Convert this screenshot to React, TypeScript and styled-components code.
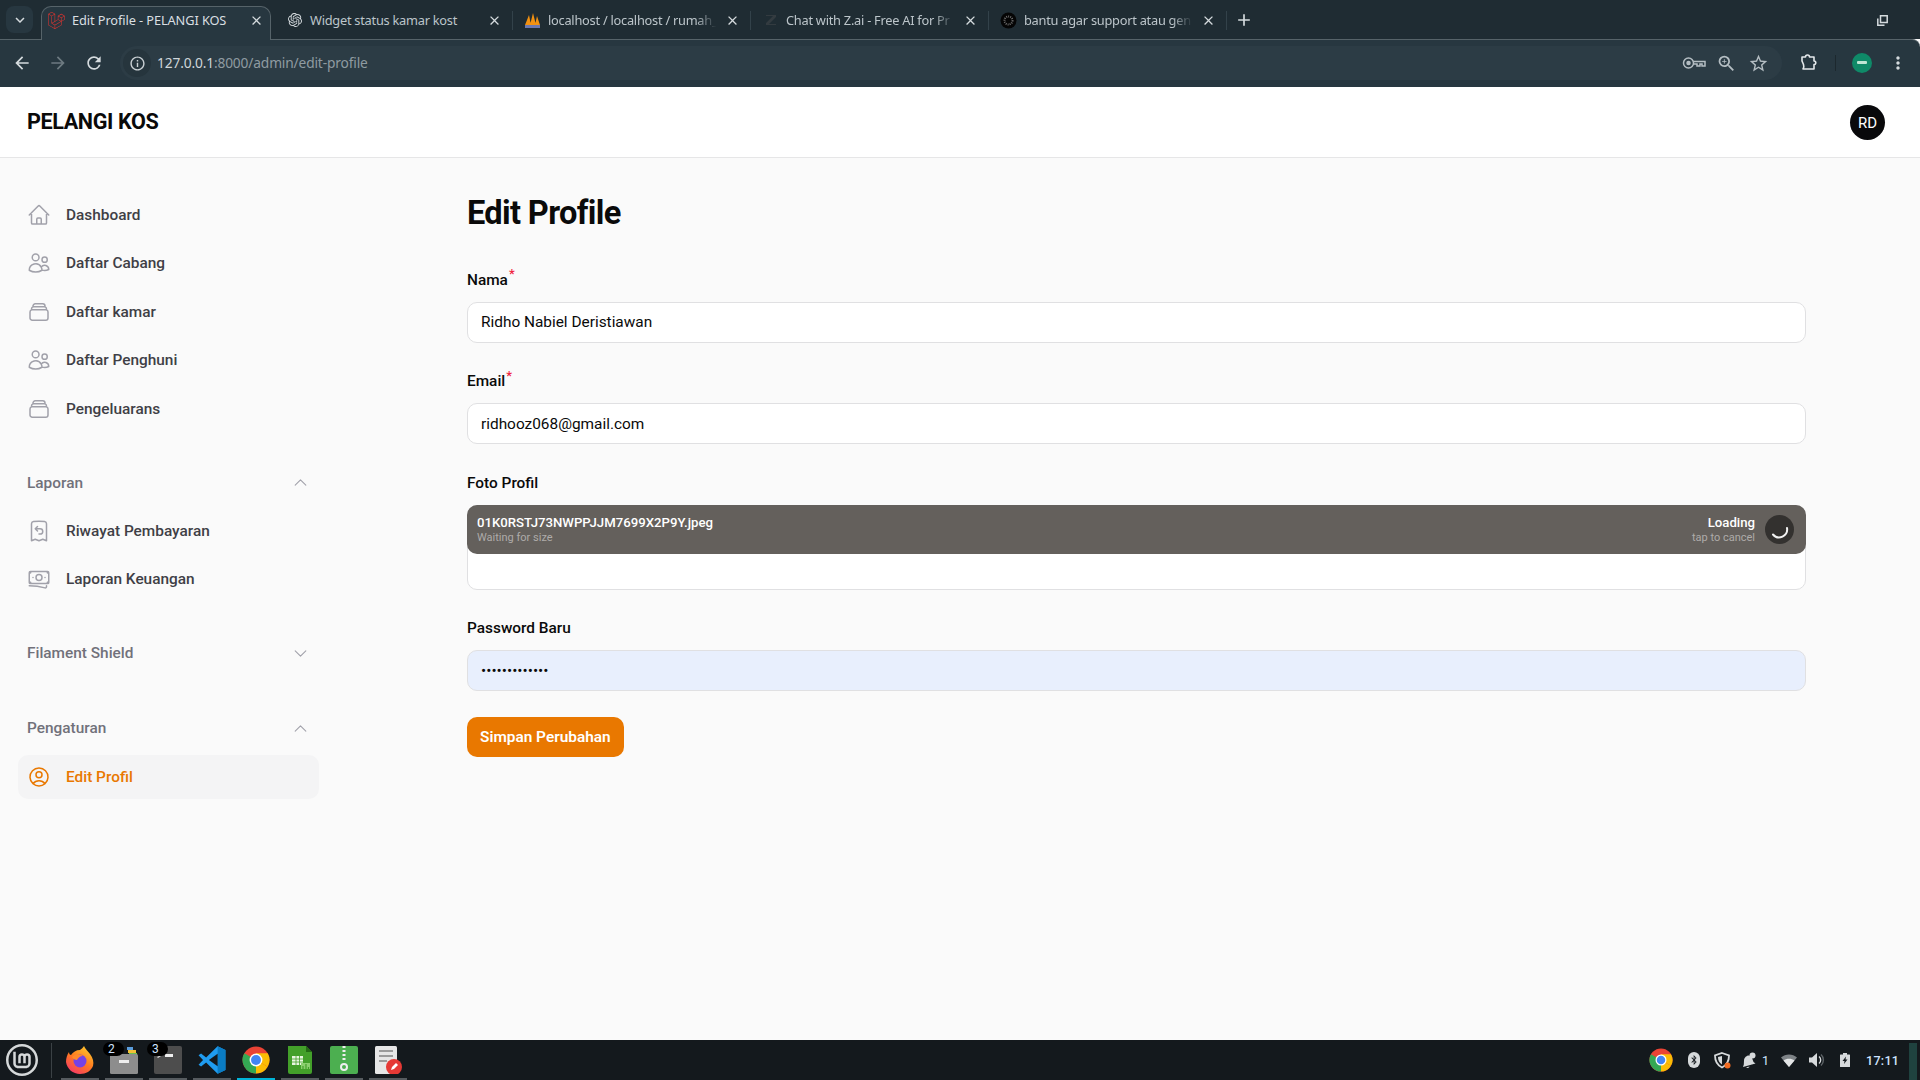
import styled, { createGlobalStyle } from "styled-components";
import type { ReactNode } from "react";
import {
  HiOutlineBanknotes,
  HiOutlineChevronDown,
  HiOutlineChevronUp,
  HiOutlineHome,
  HiOutlineReceiptRefund,
  HiOutlineRectangleStack,
  HiOutlineUserCircle,
  HiOutlineUsers,
} from "react-icons/hi2";
import {
  MdAdd,
  MdArrowBack,
  MdArrowForward,
  MdClose,
  MdInfoOutline,
  MdKeyboardArrowDown,
  MdMoreVert,
  MdRefresh,
  MdStarBorder,
  MdZoomIn,
} from "react-icons/md";
import { SiLaravel, SiLinuxmint, SiOpenai } from "react-icons/si";
import { FaBluetoothB } from "react-icons/fa";

const GlobalStyle = createGlobalStyle`
  html, body {
    margin: 0;
    padding: 0;
    background: #fafafa;
  }
  * {
    box-sizing: border-box;
  }
`;

const Screen = styled.div`
  display: flex;
  flex-direction: column;
  width: 1920px;
  height: 1080px;
  overflow: hidden;
  font-family: Roboto, "Liberation Sans", sans-serif;
`;

/* browser chrome */
const TabStrip = styled.div`
  display: flex;
  align-items: flex-end;
  height: 39px;
  flex-shrink: 0;
  padding-left: 6px;
  background: #1f2c33;
  font-family: "Noto Sans", sans-serif;
`;

const TabSearch = styled.div`
  display: flex;
  align-items: center;
  justify-content: center;
  align-self: flex-start;
  width: 27px;
  height: 27px;
  margin: 6px 4px 0 0;
  border-radius: 8px;
  background: #273740;
  color: #d5dbde;
  font-size: 18px;
`;

const Tab = styled.div<{ $active?: boolean; $sep?: boolean }>`
  position: relative;
  display: flex;
  align-items: center;
  flex-shrink: 0;
  width: 238px;
  height: 33px;
  padding: 0 0 5px 11px;
  color: ${(p) => (p.$active ? "#d9dfe2" : "#bcc5ca")};
  letter-spacing: ${(p) => (p.$active ? "-0.1px" : "-0.25px")};
  &::before {
    content: "";
    position: absolute;
    display: ${(p) => (p.$active ? "block" : "none")};
    top: 0;
    bottom: -1px;
    left: 4px;
    right: 4px;
    border: 1px solid #566369;
    border-bottom: none;
    border-radius: 10px 10px 0 0;
    background: #273740;
  }
  &::after {
    content: "";
    position: absolute;
    display: ${(p) => (p.$sep ? "block" : "none")};
    top: 5px;
    right: 0;
    width: 1px;
    height: 19px;
    background: #33424a;
  }
`;

const TabIcon = styled.span`
  position: relative;
  display: flex;
  align-items: center;
  justify-content: center;
  width: 17px;
  height: 17px;
  margin-right: 7px;
  flex-shrink: 0;
`;

const TabTitle = styled.span<{ $fade?: boolean }>`
  position: relative;
  width: 172px;
  white-space: nowrap;
  font-size: 12.8px;
  -webkit-mask-image: ${(p) =>
    p.$fade ? "linear-gradient(90deg, #000 86%, transparent 98%)" : "none"};
  mask-image: ${(p) =>
    p.$fade ? "linear-gradient(90deg, #000 86%, transparent 98%)" : "none"};
`;

const TabClose = styled.span`
  position: relative;
  display: flex;
  margin-left: 5px;
  color: #d5dbde;
  font-size: 15px;
`;

const NewTab = styled.span`
  display: flex;
  align-self: center;
  margin: 0 0 0 7px;
  color: #d5dbde;
  font-size: 20px;
`;

const WindowButton = styled.svg`
  margin: 0 32px 13px auto;
  align-self: flex-end;
`;

const Toolbar = styled.div`
  display: flex;
  align-items: center;
  height: 48px;
  flex-shrink: 0;
  padding: 0 4px 1px;
  border-top: 1px solid #566369;
  border-top-right-radius: 8px;
  background: #273740;
  color: #d5dbde;
  font-family: "Noto Sans", sans-serif;
`;

const NavButton = styled.span<{ $dim?: boolean }>`
  display: flex;
  align-items: center;
  justify-content: center;
  width: 36px;
  height: 34px;
  font-size: 20px;
  color: ${(p) => (p.$dim ? "#6d7a81" : "#d5dbde")};
`;

const Omnibox = styled.div`
  display: flex;
  align-items: center;
  flex: 1;
  height: 34px;
  margin: 0 9px 0 8px;
  padding: 0 8px 0 3px;
  border-radius: 17px;
  background: #2c3c45;
`;

const InfoChip = styled.span`
  display: flex;
  align-items: center;
  justify-content: center;
  width: 28px;
  height: 28px;
  margin-right: 6px;
  border-radius: 50%;
  background: #26353d;
  color: #c9d0d4;
  font-size: 17px;
`;

const Url = styled.span`
  flex: 1;
  padding-bottom: 2px;
  color: #8f9ba1;
  font-size: 13.75px;
  letter-spacing: -0.15px;
  b {
    font-weight: 400;
    color: #cfd6da;
  }
`;

const OmniAction = styled.span`
  display: flex;
  align-items: center;
  justify-content: center;
  width: 32px;
  color: #b5bec3;
  font-size: 21px;
`;

const ToolbarSep = styled.span`
  width: 1px;
  height: 16px;
  margin: 0 8px;
  background: #1c282e;
`;

const AccountDot = styled.span`
  position: relative;
  display: block;
  width: 20px;
  height: 20px;
  border-radius: 50%;
  background: #0f8a68;
  &::after {
    content: "";
    position: absolute;
    top: 8px;
    left: 5px;
    width: 10px;
    height: 3px;
    border-radius: 1px;
    background: #bfe6d4;
  }
`;

/* app */
const Header = styled.header`
  display: flex;
  align-items: center;
  justify-content: space-between;
  height: 71px;
  flex-shrink: 0;
  padding: 0 35px 0 27px;
  border-bottom: 1px solid #e6e6e7;
  background: #fff;
`;

const Brand = styled.div`
  margin-top: -1px;
  color: #0a0a0a;
  font-size: 21.6px;
  font-weight: 700;
  letter-spacing: -0.4px;
`;

const Avatar = styled.div`
  display: flex;
  align-items: center;
  justify-content: center;
  width: 35px;
  height: 35px;
  margin-top: 1px;
  border-radius: 50%;
  background: #09090b;
  color: #fff;
  font-size: 15px;
`;

const Body = styled.div`
  display: flex;
  flex: 1;
  min-height: 0;
  background: #fafafa;
`;

const Sidebar = styled.nav`
  display: flex;
  flex-direction: column;
  gap: 40px;
  width: 337px;
  flex-shrink: 0;
  padding: 35px 18px 0;
`;

const NavGroup = styled.div<{ $collapsed?: boolean }>`
  display: flex;
  flex-direction: column;
  gap: 4.4px;
  padding-bottom: ${(p) => (p.$collapsed ? "11px" : "0")};
`;

const GroupHead = styled.div`
  display: flex;
  align-items: center;
  justify-content: space-between;
  height: 24px;
  margin-bottom: 10px;
  padding: 0 10px 0 9px;
  color: #71717a;
  font-size: 15.4px;
  font-weight: 500;
  svg {
    color: #a1a1aa;
    font-size: 17px;
  }
`;

const CollapsedHead = styled(GroupHead)`
  margin-bottom: 0;
`;

const NavItem = styled.a<{ $active?: boolean }>`
  display: flex;
  align-items: center;
  gap: 15px;
  height: 44px;
  padding: 0 9px;
  border-radius: 10px;
  background: ${(p) => (p.$active ? "#f4f4f5" : "transparent")};
  color: ${(p) => (p.$active ? "#e97800" : "#3f3f46")};
  font-size: 15.4px;
  font-weight: 500;
  svg {
    flex-shrink: 0;
    color: ${(p) => (p.$active ? "#e97800" : "#a1a1aa")};
    font-size: 24px;
  }
`;

const Main = styled.main`
  flex: 1;
  padding: 33.5px 114px 0 130px;
`;

const Title = styled.h1`
  margin: 0 0 36px;
  color: #0a0a0a;
  font-size: 32.6px;
  line-height: 42px;
  font-weight: 700;
  letter-spacing: -0.65px;
`;

const Form = styled.form`
  display: flex;
  flex-direction: column;
  align-items: stretch;
  gap: 28.5px;
`;

const Field = styled.div`
  display: flex;
  flex-direction: column;
  gap: 12px;
`;

const Label = styled.label`
  height: 20px;
  color: #0a0a0a;
  font-size: 15.4px;
  line-height: 20px;
  font-weight: 500;
  sup {
    position: relative;
    top: 0;
    margin-left: 1px;
    color: #f0243f;
    font-size: 13px;
    line-height: 0;
  }
`;

const Input = styled.input<{ $filled?: boolean }>`
  width: 100%;
  height: 41px;
  padding: 0 13px;
  border: 1px solid #e0e0e2;
  border-radius: 10px;
  outline: none;
  background: ${(p) => (p.$filled ? "#e8effd" : "#fff")};
  color: #0a0a0a;
  font-family: Roboto, sans-serif;
  font-size: 15.4px;
`;

const Upload = styled.div`
  height: 85px;
  border: 1px solid #e0e0e2;
  border-radius: 10px;
  background: #fff;
`;

const UploadBar = styled.div`
  display: flex;
  align-items: center;
  height: 49px;
  margin: -1px -1px 0;
  padding: 0 12px 0 10px;
  border-radius: 10px;
  background: #64605c;
`;

const FileInfo = styled.div<{ $right?: boolean }>`
  display: flex;
  flex-direction: column;
  gap: 1px;
  margin-left: ${(p) => (p.$right ? "auto" : "0")};
  text-align: ${(p) => (p.$right ? "right" : "left")};
`;

const FileName = styled.span`
  color: #fff;
  font-size: 13.2px;
  line-height: 15px;
  font-weight: 500;
`;

const FileHint = styled.span`
  color: #aeaba9;
  font-size: 11px;
  line-height: 13px;
`;

const Spinner = styled.svg`
  margin-left: 10px;
`;

const SubmitButton = styled.button`
  align-self: flex-start;
  height: 40px;
  margin-top: -3px;
  padding: 0 13px;
  border: none;
  border-radius: 10px;
  background: #e97800;
  color: #fff;
  font-family: Roboto, sans-serif;
  font-size: 15.4px;
  font-weight: 600;
`;

/* desktop panel */
const Taskbar = styled.footer`
  display: flex;
  align-items: center;
  height: 40px;
  flex-shrink: 0;
  background: #14191d;
`;

const StartButton = styled.span`
  display: flex;
  align-items: center;
  justify-content: center;
  width: 44px;
  color: #d5d8d9;
  font-size: 32px;
`;

const PanelSep = styled.span`
  width: 1px;
  height: 35px;
  margin: 0 6px 0 7px;
  background: #3b4145;
`;

const Launcher = styled.span<{ $running?: boolean }>`
  position: relative;
  display: flex;
  align-items: center;
  justify-content: center;
  width: 44px;
  height: 40px;
  &::after {
    content: "";
    position: absolute;
    left: 3px;
    right: 3px;
    bottom: 0;
    height: 2px;
    background: ${(p) => (p.$running ? "#00b4d8" : "#565b5f")};
  }
`;

const WorkspaceBadge = styled.span`
  position: absolute;
  top: 2px;
  left: 1px;
  width: 21px;
  height: 14px;
  padding-left: 5px;
  border-radius: 7px;
  background: #000;
  color: #cfe3ff;
  font-size: 12px;
  line-height: 14px;
`;

const Tray = styled.div`
  display: flex;
  align-items: center;
  margin-left: auto;
  color: #d6d9db;
`;

const TraySlot = styled.span<{ $width: number }>`
  display: flex;
  align-items: center;
  justify-content: center;
  flex-shrink: 0;
  width: ${(p) => p.$width}px;
`;

const BluetoothPill = styled.span`
  display: flex;
  align-items: center;
  justify-content: center;
  width: 12px;
  height: 16px;
  border-radius: 6px;
  background: #d6d9db;
  color: #14191d;
  font-size: 10px;
`;

const BellCount = styled.span`
  margin-left: 5px;
  color: #cfe3ff;
  font-size: 12.5px;
`;

const Clock = styled.span`
  width: 32px;
  margin: 0 11px 0 9px;
  color: #cfe3ff;
  font-size: 12.5px;
  font-weight: 500;
  letter-spacing: 0.3px;
  white-space: nowrap;
`;

const DesktopStrip = styled.span`
  width: 8px;
  height: 37px;
  margin: 3px 3px 0 0;
  background: #1f423f;
`;

const ChromeLogo = ({ size }: { size: number }) => (
  <svg width={size} height={size} viewBox="0 0 48 48">
    <circle cx="24" cy="24" r="23" fill="#ea4335" />
    <path d="M24 24 L44 35.5 A23 23 0 0 1 24 47 Z" fill="#fbbc04" />
    <path d="M24 47 A23 23 0 0 1 4 12.5 L24 24 Z" fill="#34a853" />
    <path d="M24 24 L44 35.5 A23 23 0 0 0 44 12.5 L24 12.5 Z" fill="#fbbc04" />
    <circle cx="24" cy="24" r="11" fill="#fff" />
    <circle cx="24" cy="24" r="8.5" fill="#4285f4" />
  </svg>
);

const Firefox = () => (
  <svg width="30" height="30" viewBox="0 0 30 30">
    <defs>
      <linearGradient id="fx" x1="0.8" y1="0" x2="0.2" y2="1">
        <stop offset="0" stopColor="#ffcb2e" />
        <stop offset="0.5" stopColor="#ff7a1f" />
        <stop offset="1" stopColor="#f5356b" />
      </linearGradient>
    </defs>
    <path
      d="M19 1c1 3 4 5 6 8 3 4 4 8 3 12-2 5-7 8-13 8C8 29 2 24 1 17c0-4 1-7 3-10 0 2 1 3 2 3 2-3 5-5 9-5 1-1 3-2 4-4z"
      fill="url(#fx)"
    />
    <circle cx="15" cy="16" r="6.5" fill="#7542e5" />
    <path d="M7 12c3-3 8-3 11-1-3 0-5 2-6 4-2 0-4-1-5-3z" fill="#ff8a2b" />
  </svg>
);

const Files = () => (
  <svg width="28" height="28" viewBox="0 0 28 28">
    <rect x="17" y="1" width="6" height="3" fill="#5b9ddb" />
    <rect x="18" y="4" width="8" height="3" fill="#f2c037" />
    <rect x="19" y="7" width="8" height="3" fill="#6cc04a" />
    <rect x="0" y="8" width="28" height="20" rx="1.5" fill="#8d8d8d" />
    <rect x="9" y="14" width="10" height="3" fill="#eee" />
  </svg>
);

const Terminal = () => (
  <svg width="28" height="28" viewBox="0 0 28 28">
    <rect width="28" height="28" rx="2" fill="#4d4d4d" />
    <rect x="11" y="8" width="8" height="3" fill="#eee" />
    <path d="M3 11l4-2v1l-3 2z" fill="#ddd" />
  </svg>
);

const VsCode = () => (
  <svg width="28" height="28" viewBox="0 0 100 100">
    <path d="M70 1L29 41 11 27l-9 6 16 17-16 17 9 6 18-14 41 40 28-13V14z" fill="#1f9cf0" />
    <path d="M70 1l28 13v72L70 99z" fill="#0a7cc4" />
    <path d="M70 28L39 50l31 22z" fill="#14191d" />
  </svg>
);

const Sheets = () => (
  <svg width="28" height="28" viewBox="0 0 28 28">
    <path d="M2 0h18l6 6v20a2 2 0 0 1-2 2H4a2 2 0 0 1-2-2z" fill="#43a02a" />
    <path d="M20 0l6 6h-6z" fill="#246b15" />
    <path d="M6 10h11v9H6z" fill="#e8f5e0" />
    <path d="M6 13h11M6 16h11M10 10v9M13.500 10v9" stroke="#43a02a" strokeWidth="0.8" />
    <path d="M15 17h9v6h-9z" fill="#8ccf6f" />
    <path d="M17 23v-3M20 23v-5M22.500 23v-2" stroke="#43a02a" strokeWidth="1.200" />
  </svg>
);

const Archive = () => (
  <svg width="28" height="28" viewBox="0 0 28 28">
    <rect width="28" height="28" rx="2" fill="#4caf50" />
    <path d="M14 0v16" stroke="#eee" strokeWidth="3" strokeDasharray="2 2" />
    <circle cx="14" cy="21" r="3" fill="none" stroke="#eee" strokeWidth="2" />
  </svg>
);

const TextEditor = () => (
  <svg width="28" height="28" viewBox="0 0 28 28">
    <rect x="1" y="0" width="22" height="28" rx="1.5" fill="#e6e6e6" />
    <path d="M5 5h14M5 10h14M5 15h8" stroke="#9b9b9b" strokeWidth="2" />
    <circle cx="20" cy="21" r="8" fill="#e53935" />
    <path d="M17 24l1-3 4-4 2 2-4 4z" fill="#fff" />
  </svg>
);

const Shield = () => (
  <svg width="18" height="17" viewBox="0 0 18 17">
    <path d="M9 1l7 2.500c0 5.500-2 9.500-7 12-5-2.500-7-6.500-7-12z" fill="none" stroke="#d6d9db" strokeWidth="1.800" />
    <path d="M9 4v8.500c-3-2-4-4.500-4-7.500z" fill="#d6d9db" />
    <circle cx="14.500" cy="13.500" r="3" fill="#f26b21" />
  </svg>
);

const Bell = () => (
  <svg width="16" height="16" viewBox="0 0 16 16" fill="#d6d9db">
    <circle cx="11.500" cy="3.500" r="3" />
    <path d="M6 4c2-1 4 0 5 2l1.500 4 2 1.500L2 15l.8-2.400L3 8.500C3 6.500 4 5 6 4z" />
    <path d="M5 15.500c1.500 1 3 .5 3.500-1z" />
  </svg>
);

const WifiFan = () => (
  <svg width="16" height="13" viewBox="0 0 16 13">
    <path d="M8 13L0 3.500C4.500-.5 11.500-.5 16 3.500z" fill="#7d8286" />
    <path d="M8 13L2.500 6.500c3-2.500 8-2.500 11 0z" fill="#e4e6e7" />
  </svg>
);

const Speaker = () => (
  <svg width="16" height="14" viewBox="0 0 16 14">
    <path d="M0 4.500h3L8 0v14L3 9.500H0z" fill="#d6d9db" />
    <path d="M10 3.500a4.500 4.500 0 0 1 0 7" fill="none" stroke="#d6d9db" strokeWidth="1.400" />
    <path d="M12 1.500a7.500 7.500 0 0 1 0 11" fill="none" stroke="#5d6367" strokeWidth="1.400" />
  </svg>
);

const Battery = () => (
  <svg width="10" height="14" viewBox="0 0 10 14">
    <path d="M3 0h4v1.500h2.500a.5.500 0 0 1 .5.500v11.500a.5.500 0 0 1-.5.500H.5a.5.500 0 0 1-.5-.500V2a.5.500 0 0 1 .5-.5H3z" fill="#d6d9db" />
    <path d="M6 3.500L2.500 8h2L4 11l3.500-4.500h-2z" fill="#14191d" />
  </svg>
);

const KeyIcon = () => (
  <svg width="24" height="14" viewBox="0 0 24 14" fill="none" stroke="#b5bec3" strokeWidth="1.500">
    <circle cx="6.500" cy="7" r="5" />
    <circle cx="6.500" cy="7" r="1.500" fill="#b5bec3" />
    <path d="M11.500 5.500H23V10h-3V8h-2v2h-3V8h-3.500" />
  </svg>
);

const PuzzleIcon = () => (
  <svg width="18" height="18" viewBox="0 0 18 18" fill="none" stroke="#e4e8ea" strokeWidth="1.600">
    <path
      d="M2 3h3.500a2 2 0 0 1 4 0H14v4a1.800 1.800 0 0 1 0 3.600V15H3c1-1.500 1-3 .5-4.500L2 7z"
      strokeLinejoin="round"
    />
  </svg>
);

const tabs: { title: string; icon: ReactNode; fade?: boolean }[] = [
  { title: "Edit Profile - PELANGI KOS", icon: <SiLaravel size={17} color="#e3342f" /> },
  { title: "Widget status kamar kost", icon: <SiOpenai size={14} color="#d5dbde" /> },
  {
    title: "localhost / localhost / rumah_",
    fade: true,
    icon: (
      <svg width="17" height="17" viewBox="0 0 17 17">
        <path d="M1 13L5 3l2 10zM6 13L9 1l3 12zM11 13l2-9 3 9z" fill="#f29111" />
        <rect x="1" y="13" width="15" height="3" fill="#6c78af" />
      </svg>
    ),
  },
  {
    title: "Chat with Z.ai - Free AI for Pr",
    fade: true,
    icon: (
      <svg width="14" height="14" viewBox="0 0 14 14">
        <path d="M2 2h10v2L5 11h7v1H2v-2l7-7H2z" fill="#333b40" />
      </svg>
    ),
  },
  {
    title: "bantu agar support atau gen",
    fade: true,
    icon: (
      <svg width="17" height="17" viewBox="0 0 17 17">
        <circle cx="8.500" cy="8.500" r="8" fill="#050505" />
        <circle cx="8.500" cy="8.500" r="4" fill="none" stroke="#6b6b6b" strokeWidth="2" strokeDasharray="1 1" />
      </svg>
    ),
  },
];

const App = () => {
  return (
    <>
      <GlobalStyle />
      <Screen>
        <TabStrip>
          <TabSearch>
            <MdKeyboardArrowDown />
          </TabSearch>
          {tabs.map((tab, i) => (
            <Tab key={tab.title} $active={i === 0} $sep={i > 0}>
              <TabIcon>{tab.icon}</TabIcon>
              <TabTitle $fade={tab.fade}>{tab.title}</TabTitle>
              <TabClose>
                <MdClose />
              </TabClose>
            </Tab>
          ))}
          <NewTab>
            <MdAdd />
          </NewTab>
          <WindowButton width="11" height="11" viewBox="0 0 11 11" fill="none" stroke="#d5dbde" strokeWidth="1.500">
            <path d="M3.500 .8h6.700v6.700H3.500z" />
            <path d="M.8 3.500v6.700h6.700" />
          </WindowButton>
        </TabStrip>

        <Toolbar>
          <NavButton>
            <MdArrowBack />
          </NavButton>
          <NavButton $dim>
            <MdArrowForward />
          </NavButton>
          <NavButton>
            <MdRefresh />
          </NavButton>
          <Omnibox>
            <InfoChip>
              <MdInfoOutline />
            </InfoChip>
            <Url>
              <b>127.0.0.1</b>:8000/admin/edit-profile
            </Url>
            <OmniAction>
              <KeyIcon />
            </OmniAction>
            <OmniAction>
              <MdZoomIn />
            </OmniAction>
            <OmniAction>
              <MdStarBorder />
            </OmniAction>
          </Omnibox>
          <NavButton>
            <PuzzleIcon />
          </NavButton>
          <ToolbarSep />
          <NavButton>
            <AccountDot />
          </NavButton>
          <NavButton>
            <MdMoreVert />
          </NavButton>
        </Toolbar>

        <Header>
          <Brand>PELANGI KOS</Brand>
          <Avatar>RD</Avatar>
        </Header>

        <Body>
          <Sidebar>
            <NavGroup>
              <NavItem>
                <HiOutlineHome />
                Dashboard
              </NavItem>
              <NavItem>
                <HiOutlineUsers />
                Daftar Cabang
              </NavItem>
              <NavItem>
                <HiOutlineRectangleStack />
                Daftar kamar
              </NavItem>
              <NavItem>
                <HiOutlineUsers />
                Daftar Penghuni
              </NavItem>
              <NavItem>
                <HiOutlineRectangleStack />
                Pengeluarans
              </NavItem>
            </NavGroup>
            <NavGroup>
              <GroupHead>
                Laporan
                <HiOutlineChevronUp />
              </GroupHead>
              <NavItem>
                <HiOutlineReceiptRefund />
                Riwayat Pembayaran
              </NavItem>
              <NavItem>
                <HiOutlineBanknotes />
                Laporan Keuangan
              </NavItem>
            </NavGroup>
            <NavGroup $collapsed>
              <CollapsedHead>
                Filament Shield
                <HiOutlineChevronDown />
              </CollapsedHead>
            </NavGroup>
            <NavGroup>
              <GroupHead>
                Pengaturan
                <HiOutlineChevronUp />
              </GroupHead>
              <NavItem $active>
                <HiOutlineUserCircle />
                Edit Profil
              </NavItem>
            </NavGroup>
          </Sidebar>

          <Main>
            <Title>Edit Profile</Title>
            <Form>
              <Field>
                <Label>
                  Nama<sup>*</sup>
                </Label>
                <Input readOnly value="Ridho Nabiel Deristiawan" />
              </Field>
              <Field>
                <Label>
                  Email<sup>*</sup>
                </Label>
                <Input readOnly value="ridhooz068@gmail.com" />
              </Field>
              <Field>
                <Label>Foto Profil</Label>
                <Upload>
                  <UploadBar>
                    <FileInfo>
                      <FileName>01K0RSTJ73NWPPJJM7699X2P9Y.jpeg</FileName>
                      <FileHint>Waiting for size</FileHint>
                    </FileInfo>
                    <FileInfo $right>
                      <FileName>Loading</FileName>
                      <FileHint>tap to cancel</FileHint>
                    </FileInfo>
                    <Spinner width="29" height="29" viewBox="0 0 29 29">
                      <circle cx="14.500" cy="14.500" r="14.500" fill="#33312f" />
                      <path
                        d="M22 13a8 8 0 0 1-14 6.500"
                        fill="none"
                        stroke="#f2f2f2"
                        strokeWidth="2"
                        strokeLinecap="round"
                      />
                    </Spinner>
                  </UploadBar>
                </Upload>
              </Field>
              <Field>
                <Label>Password Baru</Label>
                <Input $filled readOnly type="password" value="ridhonabiel12" />
              </Field>
              <SubmitButton type="button">Simpan Perubahan</SubmitButton>
            </Form>
          </Main>
        </Body>

        <Taskbar>
          <StartButton>
            <SiLinuxmint />
          </StartButton>
          <PanelSep />
          <Launcher>
            <Firefox />
          </Launcher>
          <Launcher>
            <Files />
            <WorkspaceBadge>2</WorkspaceBadge>
          </Launcher>
          <Launcher>
            <Terminal />
            <WorkspaceBadge>3</WorkspaceBadge>
          </Launcher>
          <Launcher>
            <VsCode />
          </Launcher>
          <Launcher $running>
            <ChromeLogo size={28} />
          </Launcher>
          <Launcher>
            <Sheets />
          </Launcher>
          <Launcher>
            <Archive />
          </Launcher>
          <Launcher>
            <TextEditor />
          </Launcher>
          <Tray>
            <TraySlot $width={32}>
              <ChromeLogo size={24} />
            </TraySlot>
            <TraySlot $width={34}>
              <BluetoothPill>
                <FaBluetoothB />
              </BluetoothPill>
            </TraySlot>
            <TraySlot $width={22}>
              <Shield />
            </TraySlot>
            <TraySlot $width={44}>
              <Bell />
              <BellCount>1</BellCount>
            </TraySlot>
            <TraySlot $width={24}>
              <WifiFan />
            </TraySlot>
            <TraySlot $width={32}>
              <Speaker />
            </TraySlot>
            <TraySlot $width={24}>
              <Battery />
            </TraySlot>
            <Clock>17:11</Clock>
            <DesktopStrip />
          </Tray>
        </Taskbar>
      </Screen>
    </>
  );
};

export default App;
